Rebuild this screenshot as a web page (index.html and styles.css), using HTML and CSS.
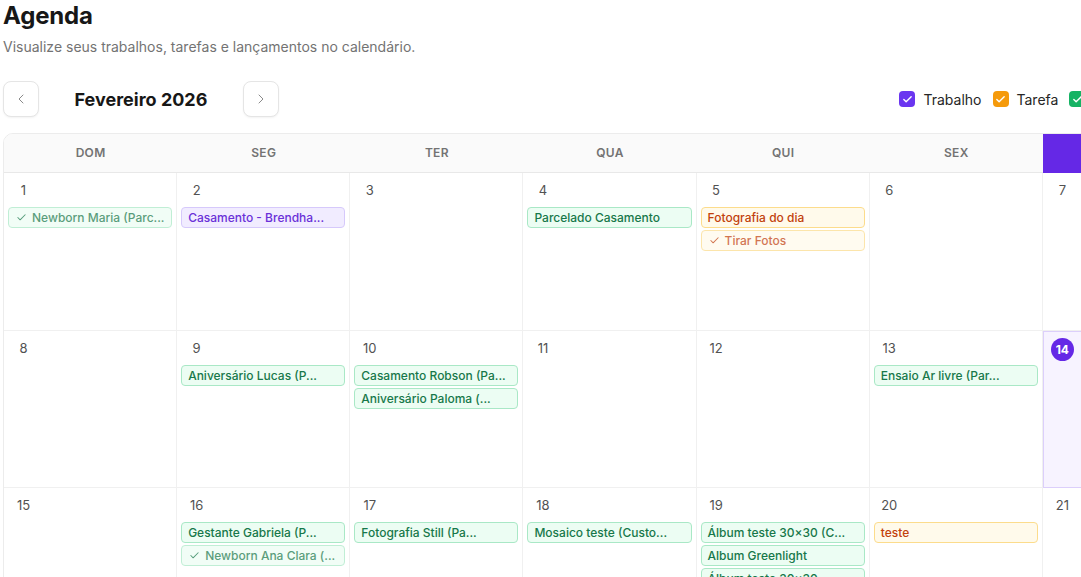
FILE: index.html
```html
<!DOCTYPE html>
<html lang="pt-BR">
<head>
<meta charset="utf-8">
<title>Agenda</title>
<link rel="stylesheet" href="styles.css">
</head>
<body>
<div class="page">
  <h1 class="title">Agenda</h1>
  <p class="subtitle">Visualize seus trabalhos, tarefas e lançamentos no calendário.</p>

  <div class="toolbar">
    <div class="nav">
      <button class="nav-btn" aria-label="Mês anterior">
        <svg width="16" height="16" viewBox="0 0 24 24" fill="none" stroke="currentColor" stroke-width="1.5" stroke-linecap="round" stroke-linejoin="round"><polyline points="15 18 9 12 15 6"/></svg>
      </button>
      <div class="month">Fevereiro 2026</div>
      <button class="nav-btn" aria-label="Próximo mês">
        <svg width="16" height="16" viewBox="0 0 24 24" fill="none" stroke="currentColor" stroke-width="1.5" stroke-linecap="round" stroke-linejoin="round"><polyline points="9 18 15 12 9 6"/></svg>
      </button>
    </div>
    <div class="legend">
      <label class="legend-item"><span class="box box-purple"><svg width="11" height="11" viewBox="0 0 24 24" fill="none" stroke="#fff" stroke-width="3" stroke-linecap="round" stroke-linejoin="round"><polyline points="20 6 9 17 4 12"/></svg></span>Trabalho</label>
      <label class="legend-item"><span class="box box-orange"><svg width="11" height="11" viewBox="0 0 24 24" fill="none" stroke="#fff" stroke-width="3" stroke-linecap="round" stroke-linejoin="round"><polyline points="20 6 9 17 4 12"/></svg></span>Tarefa</label>
      <label class="legend-item"><span class="box box-green"><svg width="11" height="11" viewBox="0 0 24 24" fill="none" stroke="#fff" stroke-width="3" stroke-linecap="round" stroke-linejoin="round"><polyline points="20 6 9 17 4 12"/></svg></span>Lançamento</label>
    </div>
  </div>

  <div class="calendar">
    <div class="head">DOM</div>
    <div class="head">SEG</div>
    <div class="head">TER</div>
    <div class="head">QUA</div>
    <div class="head">QUI</div>
    <div class="head">SEX</div>
    <div class="head head-today">SÁB</div>

    <!-- week 1 -->
    <div class="cell"><div class="num">1</div>
      <div class="ev ev-green done"><svg class="chk" width="11" height="11" viewBox="0 0 24 24" fill="none" stroke="currentColor" stroke-width="2.2" stroke-linecap="round" stroke-linejoin="round"><polyline points="20 6 9 17 4 12"/></svg>Newborn Maria (Parc...</div>
    </div>
    <div class="cell"><div class="num">2</div>
      <div class="ev ev-purple">Casamento - Brendha...</div>
    </div>
    <div class="cell"><div class="num">3</div></div>
    <div class="cell"><div class="num">4</div>
      <div class="ev ev-green">Parcelado Casamento</div>
    </div>
    <div class="cell"><div class="num">5</div>
      <div class="ev ev-orange">Fotografia do dia</div>
      <div class="ev ev-orange done"><svg class="chk" width="11" height="11" viewBox="0 0 24 24" fill="none" stroke="currentColor" stroke-width="2.2" stroke-linecap="round" stroke-linejoin="round"><polyline points="20 6 9 17 4 12"/></svg>Tirar Fotos</div>
    </div>
    <div class="cell"><div class="num">6</div></div>
    <div class="cell"><div class="num">7</div></div>

    <!-- week 2 -->
    <div class="cell"><div class="num">8</div></div>
    <div class="cell"><div class="num">9</div>
      <div class="ev ev-green">Aniversário Lucas (P...</div>
    </div>
    <div class="cell"><div class="num">10</div>
      <div class="ev ev-green">Casamento Robson (Pa...</div>
      <div class="ev ev-green">Aniversário Paloma (...</div>
    </div>
    <div class="cell"><div class="num">11</div></div>
    <div class="cell"><div class="num">12</div></div>
    <div class="cell"><div class="num">13</div>
      <div class="ev ev-green">Ensaio Ar livre (Par...</div>
    </div>
    <div class="cell cell-today"><div class="num num-today">14</div></div>

    <!-- week 3 -->
    <div class="cell"><div class="num">15</div></div>
    <div class="cell"><div class="num">16</div>
      <div class="ev ev-green">Gestante Gabriela (P...</div>
      <div class="ev ev-green done"><svg class="chk" width="11" height="11" viewBox="0 0 24 24" fill="none" stroke="currentColor" stroke-width="2.2" stroke-linecap="round" stroke-linejoin="round"><polyline points="20 6 9 17 4 12"/></svg>Newborn Ana Clara (...</div>
    </div>
    <div class="cell"><div class="num">17</div>
      <div class="ev ev-green">Fotografia Still (Pa...</div>
    </div>
    <div class="cell"><div class="num">18</div>
      <div class="ev ev-green">Mosaico teste (Custo...</div>
    </div>
    <div class="cell"><div class="num">19</div>
      <div class="ev ev-green">Álbum teste 30×30 (C...</div>
      <div class="ev ev-green">Album Greenlight</div>
      <div class="ev ev-green">Álbum teste 30×30 ...</div>
    </div>
    <div class="cell"><div class="num">20</div>
      <div class="ev ev-orange">teste</div>
    </div>
    <div class="cell"><div class="num">21</div></div>

    <!-- week 4 -->
    <div class="cell"><div class="num">22</div></div>
    <div class="cell"><div class="num">23</div></div>
    <div class="cell"><div class="num">24</div></div>
    <div class="cell"><div class="num">25</div></div>
    <div class="cell"><div class="num">26</div></div>
    <div class="cell"><div class="num">27</div></div>
    <div class="cell"><div class="num">28</div></div>
  </div>
</div>
</body>
</html>
```

FILE: styles.css
```css
html, body {
  margin: 0;
  padding: 0;
  overflow: hidden;
  background: #ffffff;
}

body {
  font-family: Inter, "Noto Sans", "Liberation Sans", sans-serif;
  color: #171717;
}

.page {
  width: 1214px;
  padding: 0 0 0 3px;
}

.title {
  margin: 0;
  font-size: 24px;
  line-height: 32px;
  font-weight: 700;
  color: #171717;
  letter-spacing: -0.2px;
}

.subtitle {
  margin: 5px 0 0 0;
  font-size: 14px;
  line-height: 20px;
  color: #737373;
}

.toolbar {
  margin-top: 24px;
  display: flex;
  align-items: center;
  justify-content: space-between;
}

.nav {
  display: flex;
  align-items: center;
}

.nav-btn {
  width: 36px;
  height: 36px;
  border: 1px solid #e5e5e5;
  border-radius: 8px;
  background: #ffffff;
  color: #8a8a8a;
  display: flex;
  align-items: center;
  justify-content: center;
  padding: 0;
  box-shadow: 0 1px 2px rgba(0,0,0,0.05);
}

.month {
  width: 204px;
  text-align: center;
  font-size: 18px;
  font-weight: 700;
  color: #171717;
}

.legend {
  display: flex;
  align-items: center;
  gap: 11px;
  padding-right: 42px;
}

.legend-item {
  display: flex;
  align-items: center;
  gap: 8px;
  font-size: 14px;
  color: #262626;
}

.box {
  width: 16px;
  height: 16px;
  border-radius: 4px;
  display: flex;
  align-items: center;
  justify-content: center;
}

.box-purple { background: #6a35f0; }
.box-orange { background: #f59a0b; }
.box-green { background: #16b364; }

.calendar {
  margin-top: 16px;
  display: grid;
  grid-template-columns: repeat(7, 1fr);
  grid-template-rows: 39px repeat(4, 157.5px);
  border: 1px solid #ececec;
  border-radius: 10px;
  overflow: hidden;
}

.head {
  display: flex;
  align-items: center;
  justify-content: center;
  padding-bottom: 1px;
  background: #fafafa;
  border-bottom: 1px solid #e8e8e8;
  font-size: 12px;
  font-weight: 600;
  color: #737373;
  letter-spacing: 0.3px;
}

.head-today {
  background: #6528e6;
  color: #ffffff;
  border-bottom-color: #6528e6;
}

.cell {
  border-right: 1px solid #f0f0f0;
  border-bottom: 1px solid #f0f0f0;
  padding: 6px 4px 4px;
  display: flex;
  flex-direction: column;
  gap: 2px;
  min-width: 0;
  overflow: hidden;
}

.cell:nth-child(7n) {
  border-right: none;
}

.cell-today {
  background: #f7f3ff;
  border: 1px solid #dccffb;
}

.num {
  width: 23px;
  height: 23px;
  line-height: 23px;
  margin-left: 4px;
  margin-bottom: 3px;
  text-align: center;
  font-size: 13px;
  color: #525252;
}

.num-today {
  border-radius: 50%;
  background: #6528e6;
  color: #ffffff;
  font-weight: 700;
  font-size: 12px;
  margin-left: 3px;
}

.ev {
  height: 21px;
  line-height: 19px;
  box-sizing: border-box;
  border: 1px solid;
  border-radius: 4px;
  padding: 0 6px;
  font-size: 12px;
  font-weight: 500;
  white-space: nowrap;
  overflow: hidden;
  display: flex;
  align-items: center;
  flex-shrink: 0;
}

.chk {
  margin-right: 5px;
  margin-left: 1px;
  flex-shrink: 0;
}

.ev-green {
  background: #ecfdf3;
  border-color: #a9e8c6;
  color: #17784a;
}

.ev-purple {
  background: #f1ecff;
  border-color: #d6c9fb;
  color: #6a30d8;
}

.ev-orange {
  background: #fffaeb;
  border-color: #fcdc8c;
  color: #c2410c;
}

.done {
  opacity: 0.72;
}
```
